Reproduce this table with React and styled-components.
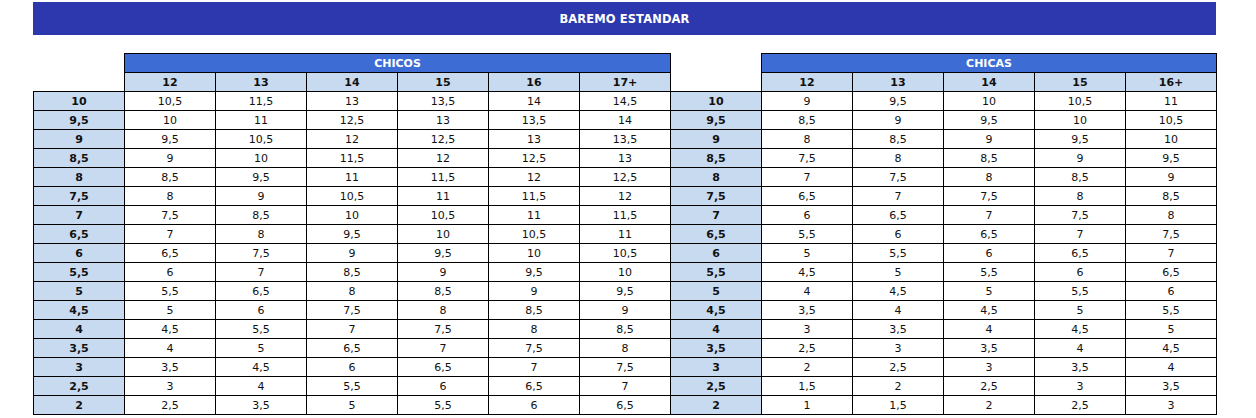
import React from 'react';
import styled, { createGlobalStyle } from 'styled-components';

const rows = [
  ['10', ['10,5', '11,5', '13', '13,5', '14', '14,5'], ['9', '9,5', '10', '10,5', '11']],
  ['9,5', ['10', '11', '12,5', '13', '13,5', '14'], ['8,5', '9', '9,5', '10', '10,5']],
  ['9', ['9,5', '10,5', '12', '12,5', '13', '13,5'], ['8', '8,5', '9', '9,5', '10']],
  ['8,5', ['9', '10', '11,5', '12', '12,5', '13'], ['7,5', '8', '8,5', '9', '9,5']],
  ['8', ['8,5', '9,5', '11', '11,5', '12', '12,5'], ['7', '7,5', '8', '8,5', '9']],
  ['7,5', ['8', '9', '10,5', '11', '11,5', '12'], ['6,5', '7', '7,5', '8', '8,5']],
  ['7', ['7,5', '8,5', '10', '10,5', '11', '11,5'], ['6', '6,5', '7', '7,5', '8']],
  ['6,5', ['7', '8', '9,5', '10', '10,5', '11'], ['5,5', '6', '6,5', '7', '7,5']],
  ['6', ['6,5', '7,5', '9', '9,5', '10', '10,5'], ['5', '5,5', '6', '6,5', '7']],
  ['5,5', ['6', '7', '8,5', '9', '9,5', '10'], ['4,5', '5', '5,5', '6', '6,5']],
  ['5', ['5,5', '6,5', '8', '8,5', '9', '9,5'], ['4', '4,5', '5', '5,5', '6']],
  ['4,5', ['5', '6', '7,5', '8', '8,5', '9'], ['3,5', '4', '4,5', '5', '5,5']],
  ['4', ['4,5', '5,5', '7', '7,5', '8', '8,5'], ['3', '3,5', '4', '4,5', '5']],
  ['3,5', ['4', '5', '6,5', '7', '7,5', '8'], ['2,5', '3', '3,5', '4', '4,5']],
  ['3', ['3,5', '4,5', '6', '6,5', '7', '7,5'], ['2', '2,5', '3', '3,5', '4']],
  ['2,5', ['3', '4', '5,5', '6', '6,5', '7'], ['1,5', '2', '2,5', '3', '3,5']],
  ['2', ['2,5', '3,5', '5', '5,5', '6', '6,5'], ['1', '1,5', '2', '2,5', '3']],
];

const boysAges = ['12', '13', '14', '15', '16', '17+'];
const girlsAges = ['12', '13', '14', '15', '16+'];

const GlobalStyle = createGlobalStyle`
  html, body {
    margin: 0;
    padding: 0;
    background: #ffffff;
  }
  body {
    font-family: "DejaVu Sans", "Noto Sans", sans-serif;
    color: #111;
  }
`;

const Page = styled.div`
  width: 1256px;
  padding: 2px 40px 0 33px;
  box-sizing: border-box;
`;

const Banner = styled.div`
  height: 33px;
  background: #2e38ae;
  color: #fff;
  display: flex;
  align-items: center;
  justify-content: center;
  font-size: 11.5px;
  font-weight: 700;
  letter-spacing: 0.1px;
`;

const Table = styled.table`
  margin-top: 18px;
  width: 1183px;
  border-collapse: collapse;
  table-layout: fixed;
  font-size: 11px;
`;

const Cell = styled.td`
  height: 18px;
  padding: 0;
  text-align: center;
  vertical-align: middle;
  border: 1px solid #000;
  line-height: 1;
  white-space: nowrap;
  background: ${(p) => (p.$head ? '#c8daf0' : '#fff')};
  font-weight: ${(p) => (p.$head ? 700 : 400)};
`;

const Blank = styled.td`
  height: 18px;
  padding: 0;
  border: none;
  background: #fff;
`;

const GroupTitle = styled.td`
  height: 18px;
  padding: 0;
  border: 1px solid #000;
  background: #3c6cd4;
  color: #fff;
  font-weight: 700;
  text-align: center;
  vertical-align: middle;
`;

export default function App() {
  return (
    <Page>
      <GlobalStyle />
      <Banner>BAREMO ESTANDAR</Banner>
      <Table>
        <colgroup>
          {Array.from({ length: 13 }).map((_, i) => (
            <col key={i} style={{ width: 91 }} />
          ))}
        </colgroup>
        <tbody>
          <tr>
            <Blank />
            <GroupTitle colSpan={6}>CHICOS</GroupTitle>
            <Blank />
            <GroupTitle colSpan={5}>CHICAS</GroupTitle>
          </tr>
          <tr>
            <Blank />
            {boysAges.map((a) => (
              <Cell key={a} $head>{a}</Cell>
            ))}
            <Blank />
            {girlsAges.map((a) => (
              <Cell key={a} $head>{a}</Cell>
            ))}
          </tr>
          {rows.map(([mark, boys, girls]) => (
            <tr key={mark}>
              <Cell $head>{mark}</Cell>
              {boys.map((v, i) => (
                <Cell key={i}>{v}</Cell>
              ))}
              <Cell $head>{mark}</Cell>
              {girls.map((v, i) => (
                <Cell key={i}>{v}</Cell>
              ))}
            </tr>
          ))}
        </tbody>
      </Table>
    </Page>
  );
}
